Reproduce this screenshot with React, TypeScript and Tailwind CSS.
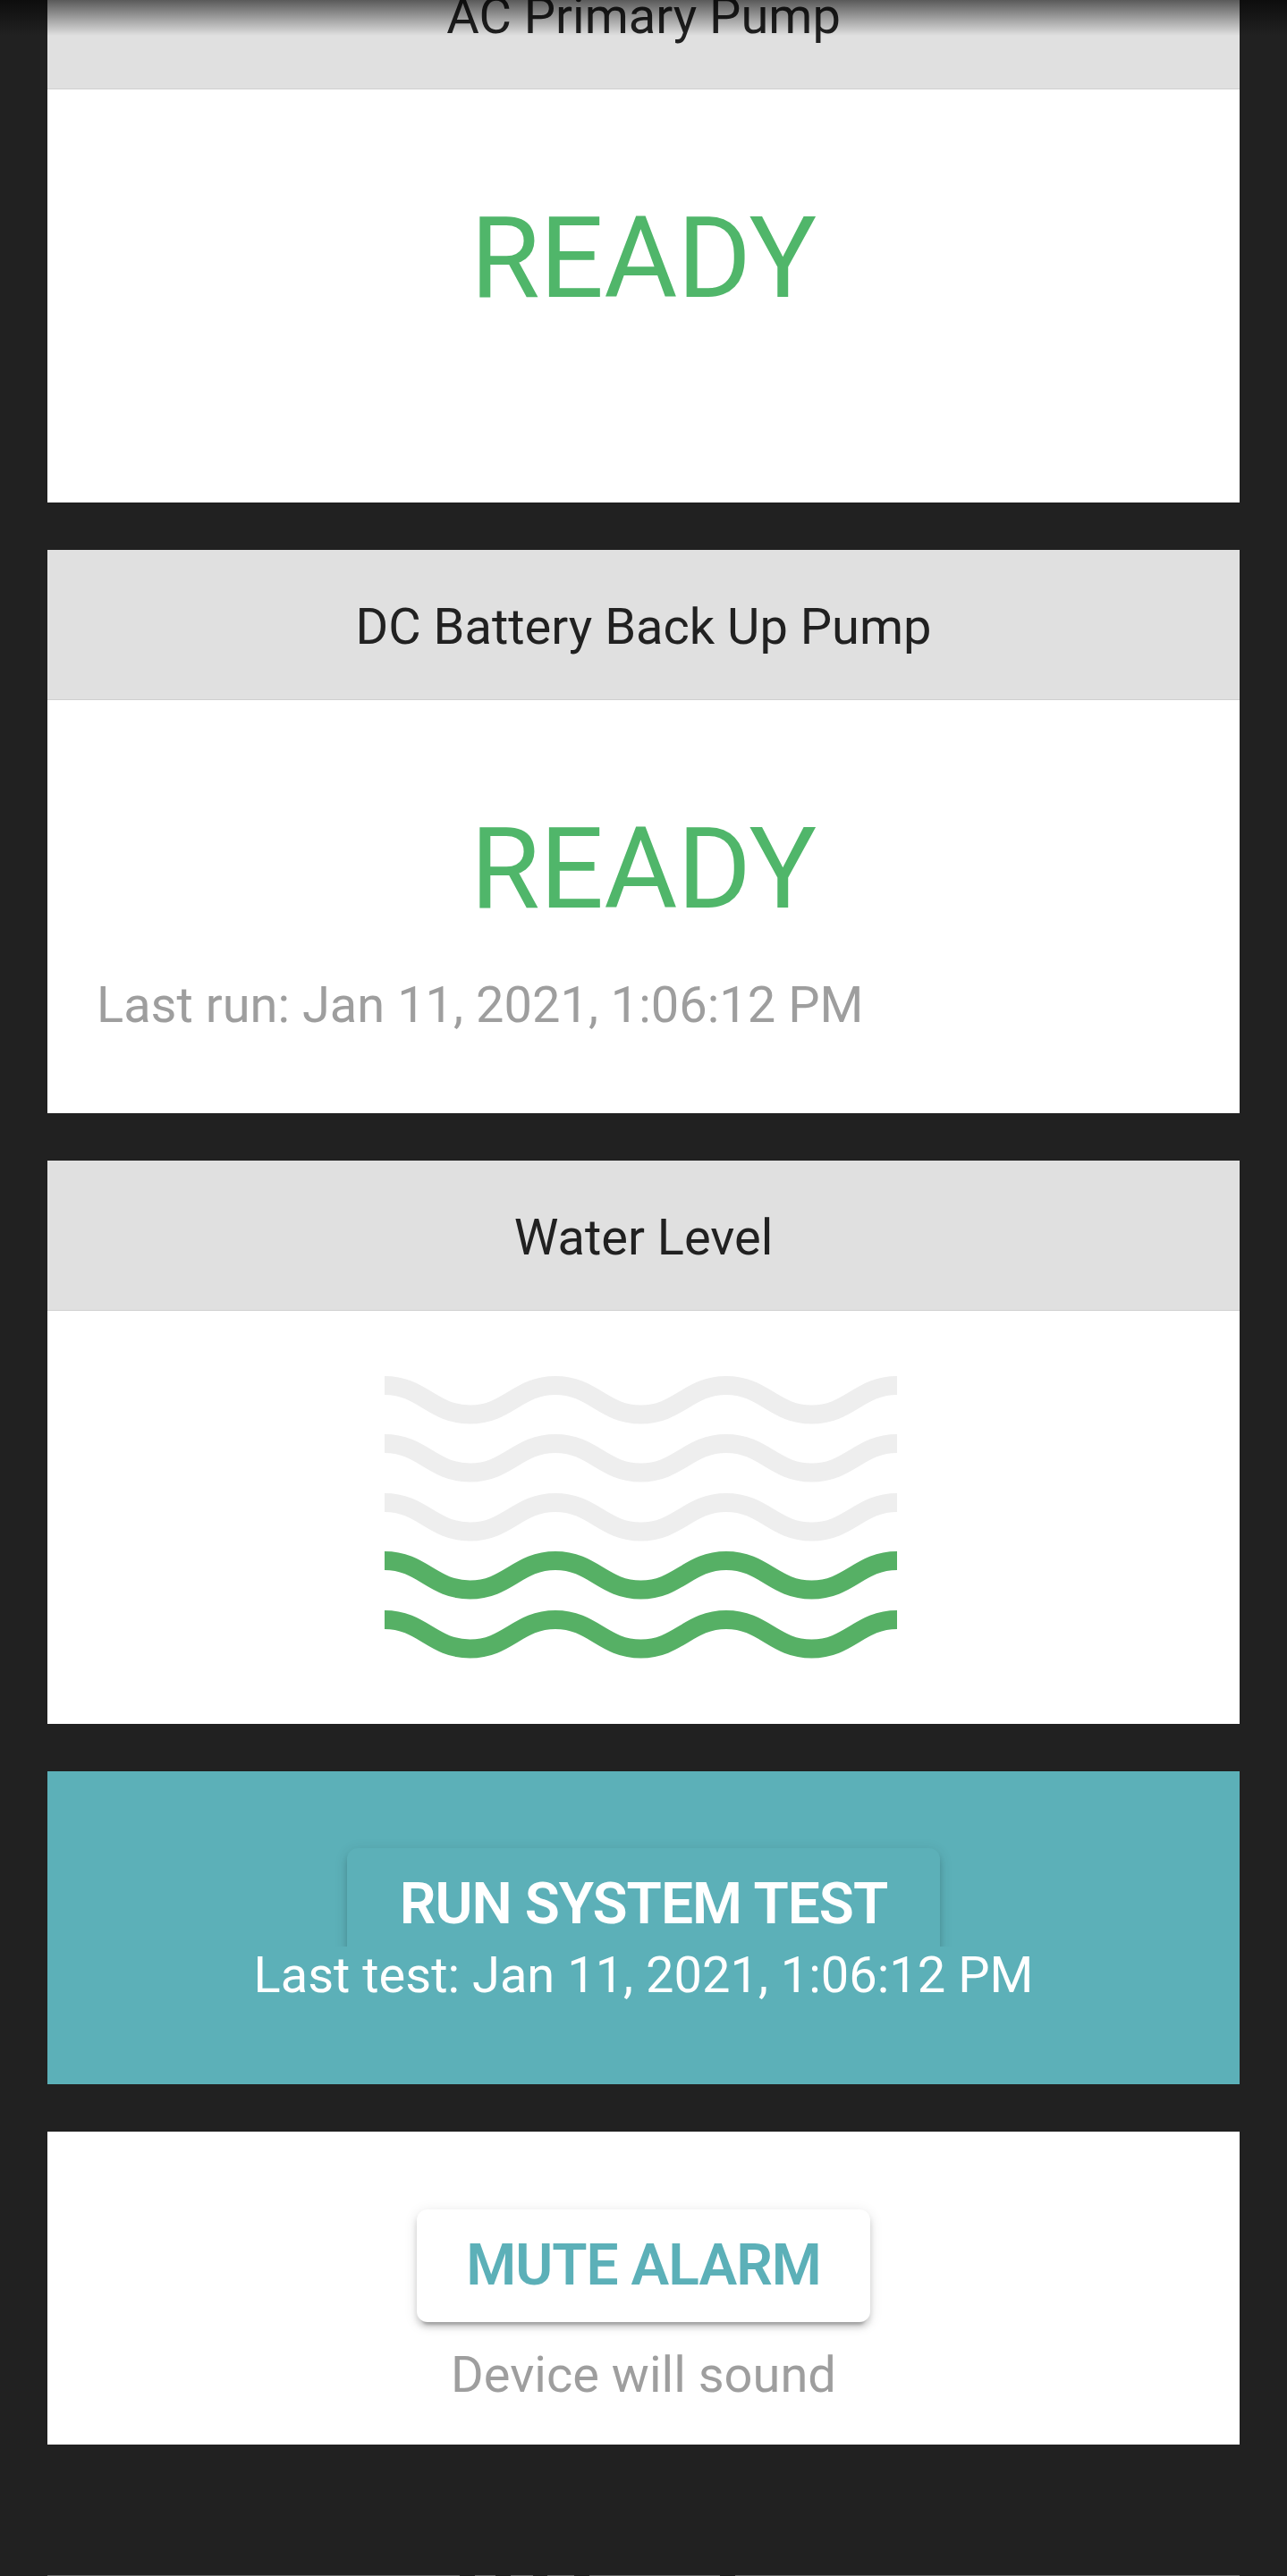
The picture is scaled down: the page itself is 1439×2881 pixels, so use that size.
const wavePath = "M0 10.5 C 42 10.5, 53.5 43, 95.5 43 S 149 10.5, 191 10.5 S 244.5 43, 286.5 43 S 340 10.5, 382 10.5 S 435.5 43, 477.5 43 S 531 10.5, 573 10.5";

function Wave({ filled }: { filled: boolean }) {
  return (
    <svg width="573" height="54" viewBox="0 0 573 54" className="block" fill="none">
      <path d={wavePath} strokeWidth="21" stroke={filled ? "#56b065" : "#eeeeee"} />
    </svg>
  );
}

function Card({ title, children }: { title: string; children: React.ReactNode }) {
  return (
    <section className="bg-white">
      <div className="h-[168px] flex items-center justify-center pt-[5px] bg-[#e0e0e0] border-b border-[#cfcfcf] text-[56px] leading-none text-[#212121]">
        {title}
      </div>
      <div className="h-[462px]">{children}</div>
    </section>
  );
}

function PumpStatus({ lastRun }: { lastRun?: string }) {
  return (
    <div className="pt-[104px]">
      <div className="text-center text-[126px] leading-[170px] text-[#50b66a]">READY</div>
      {lastRun && <p className="mt-[35px] pl-[55px] text-[56px] leading-[64px] text-[#9e9e9e]">{lastRun}</p>}
    </div>
  );
}

export default function App() {
  return (
    <div className="relative h-[2881px] overflow-hidden bg-[#212121] font-['Roboto',sans-serif]">
      {/* тень шапки при скролле */}
      <div className="absolute inset-x-0 top-0 z-10 h-[40px] bg-gradient-to-b from-black/60 to-transparent" />

      <div className="-mt-[68px] mx-[53px] flex flex-col gap-[53px]">
        <Card title="AC Primary Pump">
          <PumpStatus />
        </Card>
        <Card title="DC Battery Back Up Pump">
          <PumpStatus lastRun="Last run: Jan 11, 2021, 1:06:12 PM" />
        </Card>
        <Card title="Water Level">
          <div className="flex flex-col items-center pt-[73px] pr-[6px] gap-[11.4px]">
            <Wave filled={false} />
            <Wave filled={false} />
            <Wave filled={false} />
            <Wave filled />
            <Wave filled />
          </div>
        </Card>

        <section className="h-[350px] bg-[#5cb0b8] flex flex-col items-center pt-[86px] text-white">
          <button className="h-[126px] w-[663px] -mb-[16px] shrink-0 rounded-[12px] bg-[#5cb0b8] text-[64px] font-semibold tracking-[-1px] leading-none shadow-[0_9px_3px_-6px_rgba(0,0,0,0.2),0_6px_6px_0_rgba(0,0,0,0.14),0_3px_15px_0_rgba(0,0,0,0.12)]">
            RUN SYSTEM TEST
          </button>
          <p className="relative w-full bg-[#5cb0b8] text-center text-[56px] leading-[64px]">
            Last test: Jan 11, 2021, 1:06:12 PM
          </p>
        </section>

        <section className="h-[350px] bg-white flex flex-col items-center pt-[87px]">
          <button className="h-[126px] w-[507px] shrink-0 rounded-[12px] bg-white text-[64px] font-semibold tracking-[-1px] leading-none text-[#5cb0b8] shadow-[0_9px_3px_-6px_rgba(0,0,0,0.2),0_6px_6px_0_rgba(0,0,0,0.14),0_3px_15px_0_rgba(0,0,0,0.12)]">
            MUTE ALARM
          </button>
          <p className="mt-[27px] text-[56px] leading-[64px] text-[#9e9e9e]">Device will sound</p>
        </section>

        {/* верхний край следующей карточки, обрезан окном */}
        <div className="mt-[93px] h-px flex justify-between">
          <div className="w-[461px] bg-[#6b6b6b]" />
          <div className="w-[23px] bg-[#6b6b6b]" />
          <div className="w-[25px] bg-[#6b6b6b]" />
          <div className="w-[30px] bg-[#6b6b6b]" />
          <div className="w-[146px] bg-[#6b6b6b]" />
          <div className="w-[564px] bg-[#6b6b6b]" />
        </div>
      </div>
    </div>
  );
}
